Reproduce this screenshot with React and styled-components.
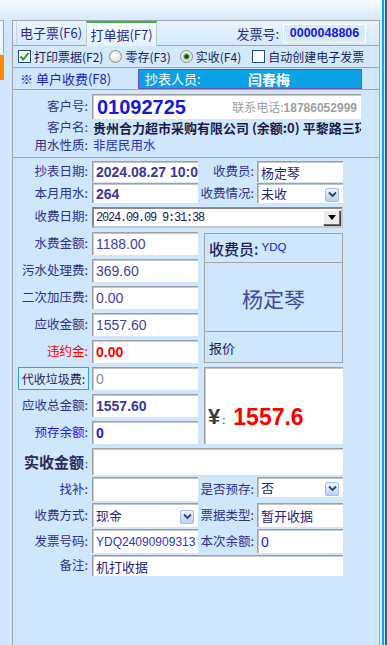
import React from 'react';
import styled, { createGlobalStyle } from 'styled-components';

const CJK = `"Noto Sans CJK SC", "Liberation Sans", sans-serif`;
const NUM = `"Liberation Sans", Arial, "Noto Sans CJK SC", sans-serif`;
const MONO = `"Liberation Mono", "DejaVu Sans Mono", monospace`;

const GlobalStyle = createGlobalStyle`
  html, body { margin: 0; padding: 0; }
  body { background: #cfe6fb; font-family: ${CJK}; }
  * { box-sizing: border-box; }
`;

const Root = styled.div`
  width: 387px;
  height: 645px;
  display: flex;
  overflow: hidden;
  background: linear-gradient(180deg, #f6fbff 0px, #e4f1fd 12px, #d3e8fb 21px, #cfe6fb 40px);
`;

const LeftCol = styled.div`
  width: 12px;
  padding-top: 20px;
  display: flex;
  flex-direction: column;
  gap: 2px;
`;

const Sliver = styled.div`
  width: 4px;
  height: 33px;
  background: #eef5fc;
  border-top: 1px solid #9fb3c8;
  border-right: 1px solid #8fa5bb;
`;

const OrangeSliver = styled.div`
  width: 4px;
  height: 25px;
  background: #ff8a00;
`;

const Center = styled.div`
  width: 368px;
  padding-top: 20px;
  display: flex;
  flex-direction: column;
`;

const RightEdge = styled.div`
  width: 7px;
  background: linear-gradient(90deg, #e2effc 0 2px, #12a0ea 2px 4px, #d8ecfb 4px 5px, #0b6cc0 5px 7px);
`;

const Panel = styled.div`
  flex: 1;
  background: #cfe6fb;
  border: 1px solid #a3a3a3;
  border-bottom: none;
  display: flex;
  flex-direction: column;
`;

const TabBar = styled.div`
  height: 25px;
  display: flex;
  align-items: flex-end;
  padding-left: 3px;
  background: linear-gradient(180deg, #eaf4fd, #d6e8f9);
  border-bottom: 1px solid #a3a3a3;
`;

const Tab = styled.div`
  width: ${p => p.$w}px;
  height: ${p => (p.$active ? 25 : 24)}px;
  display: flex;
  align-items: center;
  justify-content: center;
  font-size: 13px;
  line-height: 1;
  color: #2a2a86;
  border-left: 1px solid ${p => (p.$active ? '#b6c9dc' : '#c4d6e8')};
  border-right: 1px solid ${p => (p.$active ? '#b6c9dc' : 'transparent')};
  border-top: ${p => (p.$active ? '2px solid #3fb24a' : 'none')};
  background: ${p => (p.$active ? 'linear-gradient(180deg, #f6fbff, #e6f2fd)' : 'transparent')};
  margin-bottom: ${p => (p.$active ? -1 : 0)}px;
  padding-bottom: 1px;
`;

const InvoiceArea = styled.div`
  margin-left: auto;
  margin-right: 13px;
  height: 24px;
  display: flex;
  align-items: center;
  gap: 4px;
`;

const InvoiceLabel = styled.span`
  font-size: 13px;
  color: #2a2a80;
  line-height: 1;
`;

const InvoiceBox = styled.div`
  width: 83px;
  height: 19px;
  background: #d9ebfb;
  border: 1px solid #ffffff;
  display: flex;
  align-items: center;
  justify-content: center;
  font-family: ${NUM};
  font-weight: 700;
  font-size: 12.5px;
  color: #1616e6;
`;

const CheckRow = styled.div`
  height: 22px;
  display: flex;
  align-items: center;
  padding-left: 5px;
  gap: 6px;
  border-bottom: 1px solid #a3a3a3;
  background: #d3e8fb;
`;

const Option = styled.label`
  display: flex;
  align-items: center;
  gap: 3px;
  font-size: 12px;
  line-height: 1;
  color: #1c1c5c;
  white-space: nowrap;
  margin-left: ${p => p.$ml || 0}px;
`;

const CheckBox = styled.span`
  width: 13px;
  height: 13px;
  background: #fff;
  border: 1px solid #1f4c7a;
  display: inline-flex;
  align-items: center;
  justify-content: center;
`;

const Radio = styled.span`
  width: 13px;
  height: 13px;
  border-radius: 50%;
  border: 1px solid #8c8c8c;
  background: radial-gradient(circle at 40% 35%, #ffffff, #d6d6d6);
  display: inline-flex;
  align-items: center;
  justify-content: center;
`;

const RadioDot = styled.span`
  width: 5px;
  height: 5px;
  border-radius: 50%;
  background: radial-gradient(circle, #1b4d1b 30%, #3c9a3c);
  box-shadow: 0 0 1px 1px #8fd08f;
`;

const UnitRow = styled.div`
  height: 22px;
  display: flex;
  align-items: center;
  border-bottom: 1px solid #a3a3a3;
`;

const UnitText = styled.div`
  width: 125px;
  padding-left: 7px;
  font-size: 13px;
  line-height: 1;
  color: #1a1ad0;
  white-space: nowrap;
`;

const ReaderBar = styled.div`
  width: 224px;
  height: 20px;
  background: #0ca1e7;
  border: 1px solid #6a4fb8;
  display: flex;
  align-items: center;
  color: #ffffff;
  line-height: 1;
`;

const ReaderLabel = styled.span`
  width: 109px;
  padding-left: 6px;
  font-size: 13px;
`;

const ReaderName = styled.span`
  font-size: 14px;
  font-weight: 700;
`;

const CustSection = styled.div`
  padding: 4px 0 2px;
  display: grid;
  grid-template-columns: 79px 269px;
  grid-template-rows: 25px 16px 20px;
  border-bottom: 1px solid #a3a3a3;
`;

const Label = styled.div`
  grid-column: ${p => p.$col || 'auto'};
  display: flex;
  align-items: center;
  justify-content: flex-end;
  padding-right: ${p => (p.$pr != null ? p.$pr : 4)}px;
  font-size: ${p => p.$size || 12.5}px;
  font-weight: ${p => (p.$bold ? 700 : 400)};
  color: ${p => p.$color || '#30308a'};
  line-height: 1;
  white-space: nowrap;
`;

const Colon = styled.span`
  font-size: 11px;
  font-weight: 400;
  align-self: flex-end;
  margin-bottom: 6px;
  margin-left: 1px;
`;

const CustNoBox = styled.div`
  background: #fff;
  border-top: 1px solid #a0a0a0;
  border-left: 1px solid #a0a0a0;
  box-shadow: inset 1px 1px 0 #c8c8c8;
  display: flex;
  align-items: center;
  justify-content: space-between;
  padding: 0 4px;
  white-space: nowrap;
`;

const CustNo = styled.span`
  font-family: ${NUM};
  font-weight: 700;
  font-size: 20px;
  color: #1717e0;
`;

const Phone = styled.span`
  font-size: 12px;
  color: #a0a0a0;
  line-height: 1;
`;

const PhoneNum = styled.span`
  font-family: ${NUM};
  font-weight: 700;
  font-size: 12px;
`;

const PlainValue = styled.div`
  display: flex;
  align-items: center;
  overflow: hidden;
  white-space: nowrap;
  font-size: ${p => p.$size || 12.5}px;
  font-weight: ${p => (p.$bold ? 700 : 400)};
  color: ${p => p.$color || '#1a1a4a'};
  line-height: 1;
  padding-left: 1px;
`;

const FormSection = styled.div`
  padding-top: 3px;
  display: flex;
  flex-direction: column;
`;

const TopGrid = styled.div`
  display: grid;
  grid-template-columns: 79px 106px 59px 86px;
  grid-template-rows: 21px 20px 24px;
  row-gap: 1px;
`;

const MidGrid = styled.div`
  margin-top: 4px;
  display: grid;
  grid-template-columns: 79px 106px 6px 139px;
  grid-template-rows: repeat(8, 23px);
  row-gap: 4px;
`;

const BottomGrid = styled.div`
  margin-top: 4px;
  display: grid;
  grid-template-columns: 79px 106px 59px 86px;
  grid-template-rows: 27px 24px 24px 24px 21px;
  row-gap: 2px;
`;

const Field = styled.div`
  display: flex;
  align-items: center;
  background: #fff;
  border-top: 1px solid #a0a0a0;
  border-left: 1px solid #a0a0a0;
  box-shadow: inset 1px 1px 0 #c6c6c6;
  padding: 0 3px;
  overflow: hidden;
  white-space: nowrap;
  font-family: ${p => (p.$cjk ? CJK : NUM)};
  font-size: ${p => p.$size || 14}px;
  font-weight: ${p => (p.$bold ? 700 : 400)};
  color: ${p => p.$color || '#4242a4'};
  line-height: 1;
  grid-column: ${p => p.$col || 'auto'};
  margin-bottom: ${p => p.$mb || 0}px;
`;

const FieldText = styled.span`
  flex: 1;
  overflow: hidden;
`;

const DropBtn = styled.span`
  width: 14px;
  height: 14px;
  margin-left: auto;
  margin-right: 1px;
  margin-top: 2px;
  border: 1px solid #a6bde0;
  border-radius: 2px;
  background: linear-gradient(180deg, #eef4fe, #bcd0f2);
  display: inline-flex;
  align-items: center;
  justify-content: center;
  flex: none;
`;

const DateBox = styled.div`
  grid-column: 2 / span 3;
  margin-top: 3px;
  height: 21px;
  background: #fff;
  border: 2px solid;
  border-color: #8a8a8a #c8c8c8 #c8c8c8 #8a8a8a;
  display: flex;
  align-items: center;
  padding-left: 2px;
  padding-right: 1px;
`;

const DateText = styled.span`
  font-family: ${MONO};
  font-size: 12px;
  letter-spacing: -1.2px;
  color: #1a1a4a;
  flex: 1;
`;

const DateBtn = styled.span`
  width: 17px;
  height: 15px;
  background: #ececec;
  border: 1px solid;
  border-color: #ffffff #6e6e6e #6e6e6e #ffffff;
  box-shadow: 1px 1px 0 #404040;
  display: inline-flex;
  align-items: center;
  justify-content: center;
`;

const CashierBox = styled.div`
  grid-column: 4;
  grid-row: 1 / span 5;
  margin-top: 1px;
  border: 1px solid #a3a3a3;
  display: grid;
  grid-template-rows: 29px 1fr 30px;
`;

const CashierHead = styled.div`
  display: flex;
  align-items: center;
  padding-left: 4px;
  border-bottom: 1px solid #a3a3a3;
  line-height: 1;
`;

const CashierTitle = styled.span`
  font-size: 15px;
  color: #1c1c5a;
  font-weight: 500;
`;

const CashierCode = styled.span`
  font-family: ${NUM};
  font-size: 11.5px;
  color: #2020d8;
  margin-left: 3px;
`;

const CashierName = styled.div`
  display: flex;
  align-items: center;
  justify-content: center;
  font-size: 21px;
  color: #4545a4;
  border-bottom: 1px solid #a3a3a3;
  padding-top: 2px;
`;

const CashierFoot = styled.div`
  display: flex;
  align-items: center;
  padding-left: 4px;
  font-size: 13px;
  color: #1c1c5a;
  line-height: 1;
`;

const TotalBox = styled.div`
  grid-column: 4;
  grid-row: 6 / span 3;
  background: #fff;
  border-top: 1px solid #a0a0a0;
  border-left: 1px solid #a0a0a0;
  box-shadow: inset 1px 1px 0 #c6c6c6;
  display: flex;
  align-items: center;
  padding: 22px 0 0 3px;
  line-height: 1;
`;

const Yen = styled.span`
  font-family: ${NUM};
  font-weight: 700;
  font-size: 22px;
  color: #3a3a3a;
`;

const YenColon = styled.span`
  font-size: 11px;
  color: #3a3a3a;
  margin: 4px 8px 0 2px;
`;

const TotalNum = styled.span`
  font-family: ${NUM};
  font-weight: 700;
  font-size: 23px;
  color: #ff0000;
`;

const FeeButton = styled.div`
  grid-column: 1;
  margin-left: 5px;
  margin-right: 3px;
  border: 1px solid #22a2e8;
  background: #d6ebfc;
  display: flex;
  align-items: center;
  justify-content: center;
  font-size: 12px;
  color: #1c1c5c;
  line-height: 1;
  white-space: nowrap;
`;

const Chevron = () => (
  <svg width="9" height="7" viewBox="0 0 9 7">
    <path d="M1 1.5 L4.5 5 L8 1.5" fill="none" stroke="#29417a" strokeWidth="1.8" />
  </svg>
);

const Check = () => (
  <svg width="11" height="11" viewBox="0 0 11 11">
    <path d="M1.5 5.5 L4.3 8.5 L9.5 2" fill="none" stroke="#1f9a2a" strokeWidth="2" />
  </svg>
);

const Tri = () => (
  <svg width="8" height="5" viewBox="0 0 8 5">
    <path d="M0 0 H8 L4 5 Z" fill="#000" />
  </svg>
);

export default function App() {
  return (
    <>
      <GlobalStyle />
      <Root>
        <LeftCol>
          <Sliver />
          <OrangeSliver />
        </LeftCol>
        <Center>
          <Panel>
            <TabBar>
              <Tab $w={70}>电子票(F6)</Tab>
              <Tab $w={71} $active>打单据(F7)</Tab>
              <InvoiceArea>
                <InvoiceLabel>发票号:</InvoiceLabel>
                <InvoiceBox>0000048806</InvoiceBox>
              </InvoiceArea>
            </TabBar>

            <CheckRow>
              <Option>
                <CheckBox><Check /></CheckBox>
                打印票据(F2)
              </Option>
              <Option>
                <Radio />
                零存(F3)
              </Option>
              <Option $ml={3}>
                <Radio><RadioDot /></Radio>
                实收(F4)
              </Option>
              <Option $ml={5}>
                <CheckBox />
                自动创建电子发票
              </Option>
            </CheckRow>

            <UnitRow>
              <UnitText>※ 单户收费(F8)</UnitText>
              <ReaderBar>
                <ReaderLabel>抄表人员:</ReaderLabel>
                <ReaderName>闫春梅</ReaderName>
              </ReaderBar>
            </UnitRow>

            <CustSection>
              <Label>客户号:</Label>
              <CustNoBox>
                <CustNo>01092725</CustNo>
                <Phone>联系电话:<PhoneNum>18786052999</PhoneNum></Phone>
              </CustNoBox>
              <Label>客户名:</Label>
              <PlainValue $bold $size={13}>贵州合力超市采购有限公司 (余额:0) 平黎路三环路口</PlainValue>
              <Label>用水性质:</Label>
              <PlainValue $color="#2433d0">非居民用水</PlainValue>
            </CustSection>

            <FormSection>
              <TopGrid>
                <Label>抄表日期:</Label>
                <Field $bold $color="#3838a2">2024.08.27 10:05</Field>
                <Label $pr={3}>收费员:</Label>
                <Field $cjk $size={13} $color="#262680">杨定琴</Field>
                <Label>本月用水:</Label>
                <Field $bold $color="#3838a2">264</Field>
                <Label $pr={3}>收费情况:</Label>
                <Field $cjk $size={13} $color="#262680">
                  <FieldText>未收</FieldText>
                  <DropBtn><Chevron /></DropBtn>
                </Field>
                <Label>收费日期:</Label>
                <DateBox>
                  <DateText>2024.09.09 9:31:38</DateText>
                  <DateBtn><Tri /></DateBtn>
                </DateBox>
              </TopGrid>

              <MidGrid>
                <Label $col="1">水费金额:</Label>
                <Field $col="2">1188.00</Field>
                <Label $col="1">污水处理费:</Label>
                <Field $col="2">369.60</Field>
                <Label $col="1">二次加压费:</Label>
                <Field $col="2">0.00</Field>
                <Label $col="1">应收金额:</Label>
                <Field $col="2">1557.60</Field>
                <Label $col="1" $color="#ff0000">违约金:</Label>
                <Field $col="2" $bold $color="#ff0000">0.00</Field>

                <FeeButton>代收垃圾费:</FeeButton>
                <Field $col="2" $color="#8a8a8a">0</Field>
                <Label $col="1">应收总金额:</Label>
                <Field $col="2" $bold $color="#3838a2">1557.60</Field>
                <Label $col="1" $color="#1a1aff">预存余额:</Label>
                <Field $col="2" $bold $color="#1616e8">0</Field>

                <CashierBox>
                  <CashierHead>
                    <CashierTitle>收费员:</CashierTitle>
                    <CashierCode>YDQ</CashierCode>
                  </CashierHead>
                  <CashierName>杨定琴</CashierName>
                  <CashierFoot>报价</CashierFoot>
                </CashierBox>
                <TotalBox>
                  <Yen>¥</Yen>
                  <YenColon>:</YenColon>
                  <TotalNum>1557.6</TotalNum>
                </TotalBox>
              </MidGrid>

              <BottomGrid>
                <Label $bold $size={15} $color="#2a2a5c">实收金额<Colon>:</Colon></Label>
                <Field $col="2 / span 3" />
                <Label>找补:</Label>
                <Field />
                <Label $pr={3}>是否预存:</Label>
                <Field $cjk $size={13} $color="#262680" $mb={4}>
                  <FieldText>否</FieldText>
                  <DropBtn><Chevron /></DropBtn>
                </Field>
                <Label>收费方式:</Label>
                <Field $cjk $size={13} $color="#262680">
                  <FieldText>现金</FieldText>
                  <DropBtn><Chevron /></DropBtn>
                </Field>
                <Label $pr={3}>票据类型:</Label>
                <Field $cjk $size={13} $color="#262680">暂开收据</Field>
                <Label>发票号码:</Label>
                <Field $size={12} $color="#3333c4">YDQ24090909313</Field>
                <Label $pr={3}>本次余额:</Label>
                <Field $color="#1a1af0">0</Field>
                <Label>备注:</Label>
                <Field $col="2 / span 3" $cjk $size={13} $color="#262680">机打收据</Field>
              </BottomGrid>
            </FormSection>
          </Panel>
        </Center>
        <RightEdge />
      </Root>
    </>
  );
}
